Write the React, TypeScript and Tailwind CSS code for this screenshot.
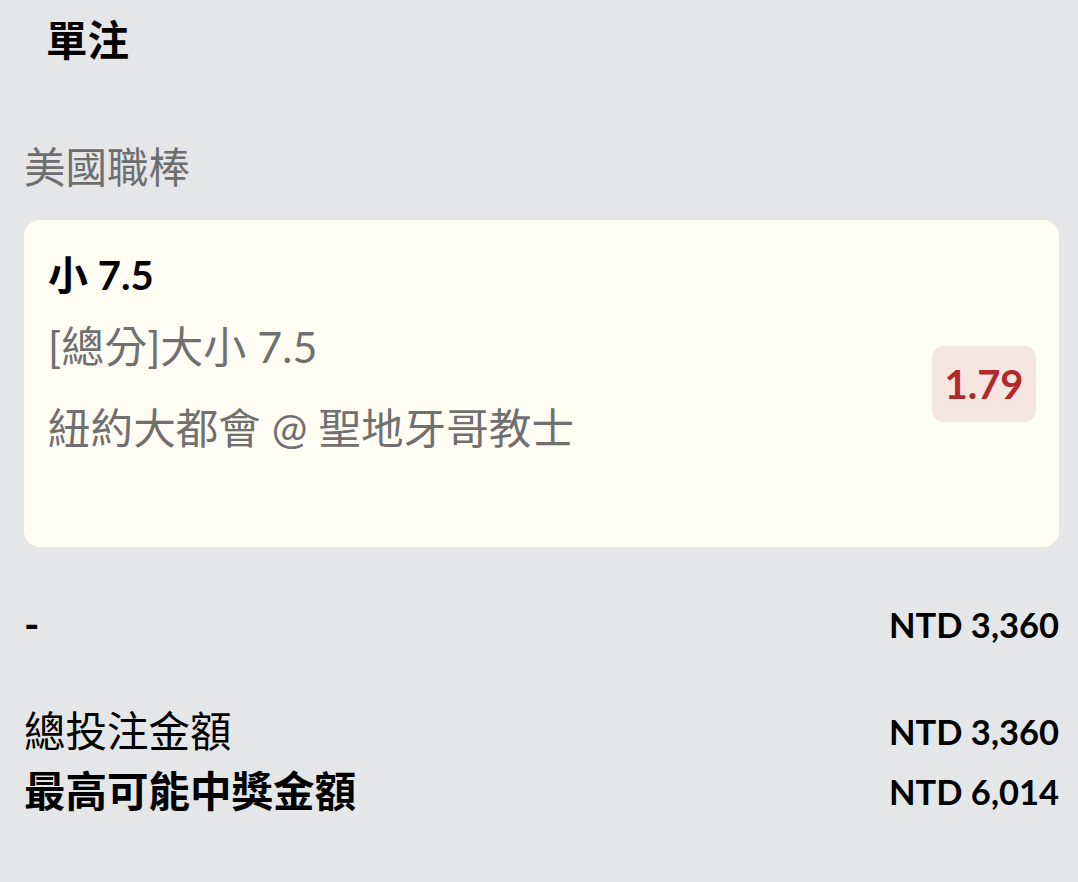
import React from "react";

const font = { fontFamily: 'Lato, "Noto Sans CJK TC", sans-serif' };

export default function App() {
  return (
    <div
      className="w-[1078px] h-[882px] bg-[#e5e6e8] text-black overflow-hidden"
      style={font}
    >
      <div className="h-[80px] flex items-center pl-[46px]">
        <span className="text-[41.5px] leading-[59px] font-bold">單注</span>
      </div>
      <div className="pl-[24px] pr-[19px]">
        <div className="mt-[58px] text-[41.5px] leading-[59px] text-[#6e6e6e]">美國職棒</div>
        <div className="mt-[23px] h-[327px] rounded-[16px] bg-[#fffdf4] flex items-center justify-between pl-[24px] pr-[23px]">
          <div className="self-start pt-[26px]">
            <div className="text-[40px] leading-[59px] font-bold">小 7.5</div>
            <div className="mt-[12px] text-[43px] leading-[59px] text-[#707070]">[總分]大小 7.5</div>
            <div className="mt-[22px] text-[42.6px] leading-[59px] text-[#707070]">紐約大都會 @ 聖地牙哥教士</div>
          </div>
          <div className="w-[104px] h-[76px] rounded-[12px] bg-[#f6e6e0] flex items-center justify-center">
            <span className="text-[40px] font-bold text-[#b2292b]">1.79</span>
          </div>
        </div>
        <div className="mt-[48px] flex items-center justify-between h-[59px]">
          <span className="text-[41.5px] font-bold">-</span>
          <span className="text-[34.5px] font-bold">NTD 3,360</span>
        </div>
        <div className="mt-[48px] flex items-center justify-between h-[59px]">
          <span className="text-[41.5px]">總投注金額</span>
          <span className="text-[34.5px] font-bold">NTD 3,360</span>
        </div>
        <div className="mt-[1px] flex items-center justify-between h-[59px]">
          <span className="text-[41.5px] font-bold">最高可能中獎金額</span>
          <span className="text-[34.5px] font-bold">NTD 6,014</span>
        </div>
      </div>
    </div>
  );
}
